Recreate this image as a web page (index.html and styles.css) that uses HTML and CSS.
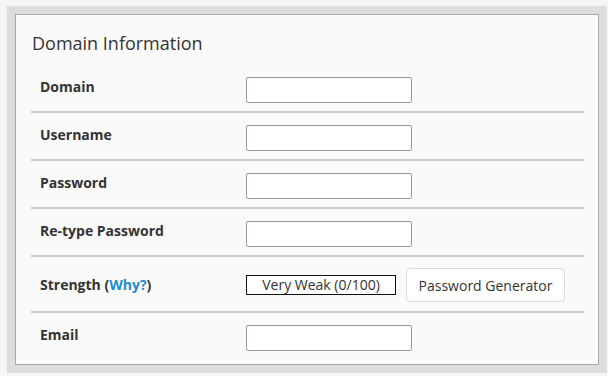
FILE: index.html
```html
<!DOCTYPE html>
<html>
<head>
<meta charset="utf-8">
<link rel="stylesheet" href="styles.css">
</head>
<body>
<div class="frame">
  <div class="panel">
    <div class="title">Domain Information</div>
    <div class="row">
      <div class="label">Domain</div>
      <div class="field"><input class="input" type="text"></div>
    </div>
    <div class="row">
      <div class="label">Username</div>
      <div class="field"><input class="input" type="text"></div>
    </div>
    <div class="row">
      <div class="label">Password</div>
      <div class="field"><input class="input" type="password"></div>
    </div>
    <div class="row">
      <div class="label">Re-type Password</div>
      <div class="field"><input class="input" type="password"></div>
    </div>
    <div class="row row-strength">
      <div class="label">Strength (<a class="why" href="#">Why?</a>)</div>
      <div class="field">
        <div class="meter">Very Weak (0/100)</div>
        <button class="btn" type="button">Password Generator</button>
      </div>
    </div>
    <div class="row row-last">
      <div class="label">Email</div>
      <div class="field"><input class="input" type="text"></div>
    </div>
  </div>
</div>
</body>
</html>
```

FILE: styles.css
```css
html, body {
  margin: 0;
  padding: 0;
  background: #f5f5f5;
}
body {
  padding: 6px 1px 0 7px;
  font-family: "Open Sans", "Liberation Sans", sans-serif;
  color: #333;
}
.frame {
  width: 600px;
  height: 367px;
  box-sizing: border-box;
  background: #dddddd;
  padding: 8px;
}
.panel {
  box-sizing: border-box;
  height: 351px;
  background: #fafafa;
  border: 1px solid #a8a8a8;
  padding: 16px 14px 0 15px;
}
.title {
  font-size: 18px;
  line-height: 25px;
  margin-left: 1px;
  margin-bottom: 9px;
  color: #333;
}
.row {
  display: flex;
  align-items: flex-start;
  padding: 12px 0 8px 9px;
  border-bottom: 2px solid #cccccc;
}
.row-last {
  border-bottom: none;
}
.label {
  width: 206px;
  font-size: 14px;
  font-weight: 700;
  line-height: 20px;
  color: #333;
}
.why {
  color: #1e8bd8;
  text-decoration: none;
}
.field {
  display: flex;
  align-items: center;
  gap: 10px;
}
.input {
  box-sizing: border-box;
  width: 166px;
  height: 26px;
  margin: 0;
  border: 1px solid #9a98a4;
  border-radius: 2px;
  background: #fff;
  padding: 0 6px;
  font-family: inherit;
}
.row-strength {
  align-items: center;
  padding-top: 11px;
  padding-bottom: 9px;
}
.meter {
  box-sizing: border-box;
  width: 150px;
  height: 20px;
  border: 1px solid #111;
  background: #fff;
  font-size: 14px;
  line-height: 18px;
  text-align: center;
  color: #333;
}
.btn {
  box-sizing: border-box;
  height: 34px;
  width: 159px;
  margin: 0;
  padding: 0 10px;
  border: 1px solid #dcdcdc;
  border-radius: 4px;
  background: #fff;
  font-family: inherit;
  font-size: 14px;
  color: #333;
}
```
